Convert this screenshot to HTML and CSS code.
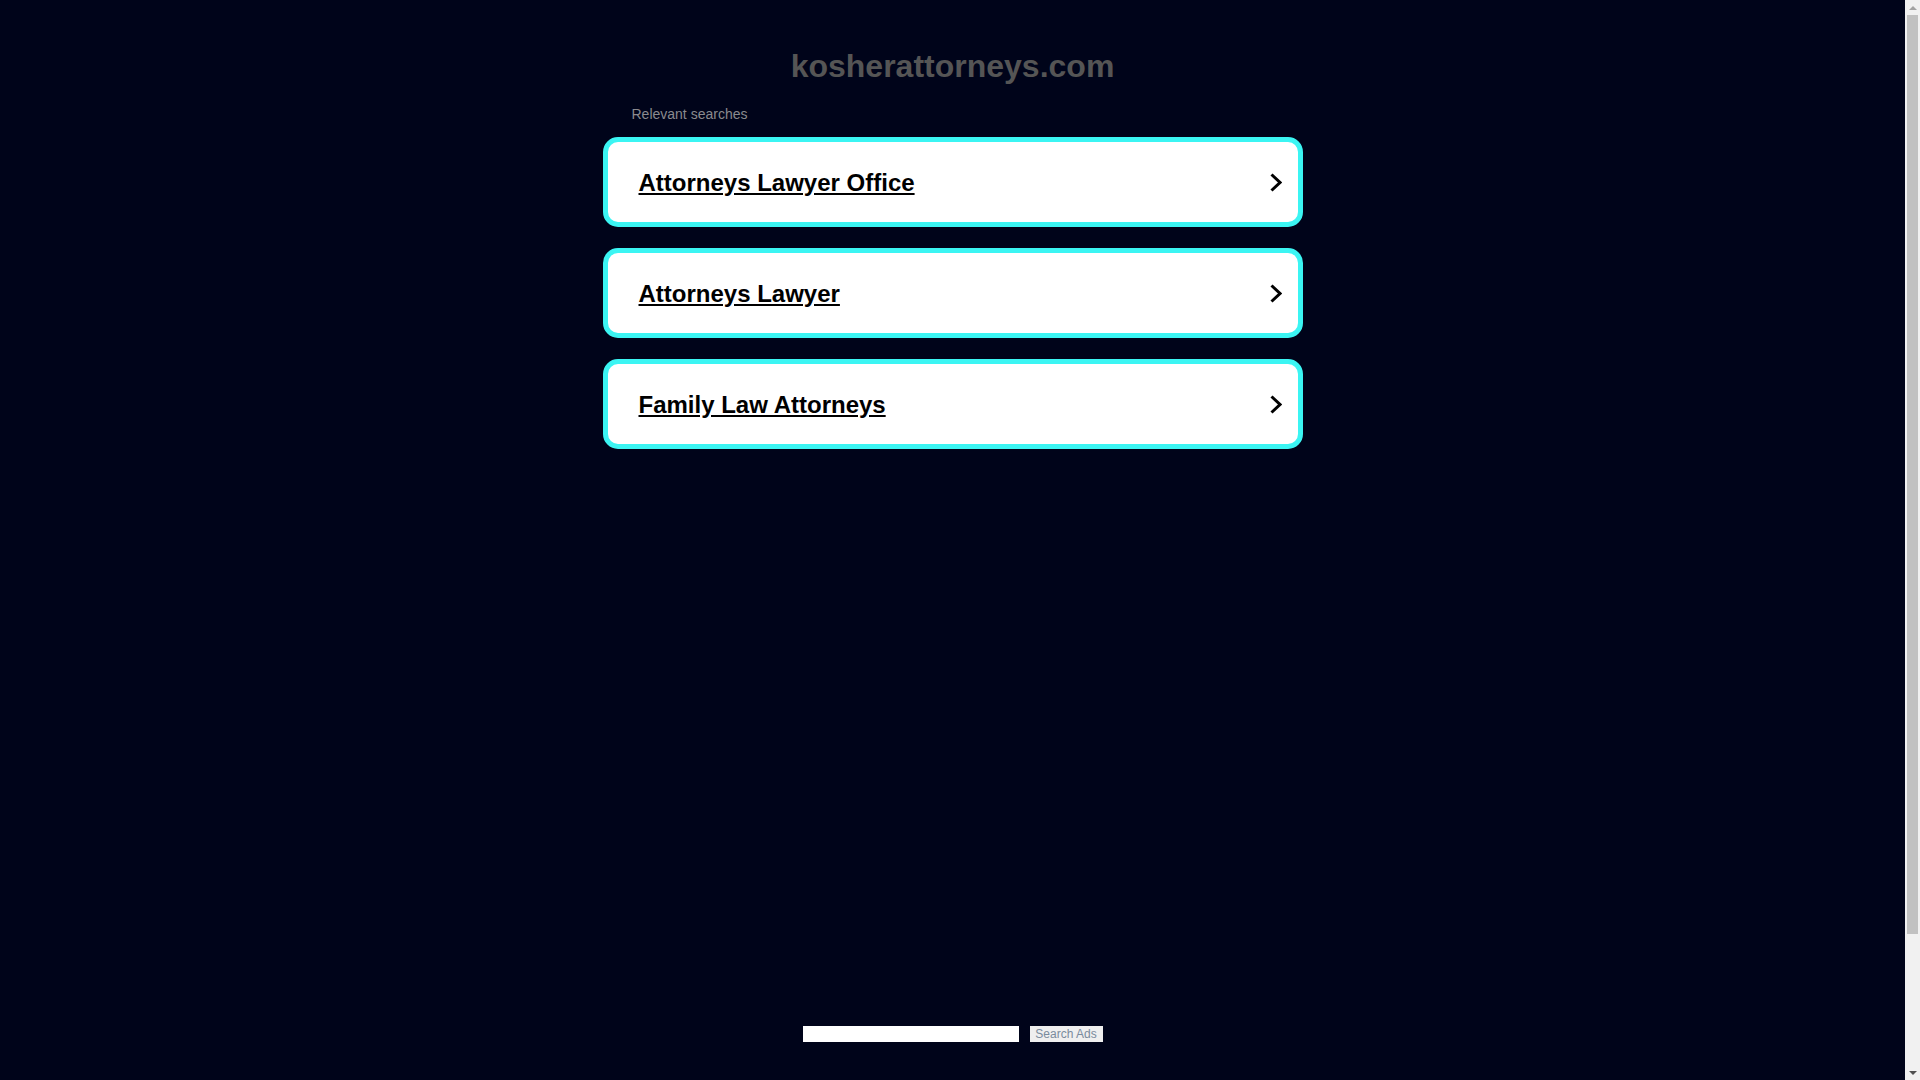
FILE: index.html
```html
<!DOCTYPE html>
<html lang="en">
<head>
<meta charset="utf-8">
<title>kosherattorneys.com</title>
<link rel="stylesheet" href="styles.css">
</head>
<body>
<div class="page">
  <h1 class="domain">kosherattorneys.com</h1>
  <div class="content">
    <div class="label">Relevant searches</div>
    <ul class="links">
      <li class="link-box"><a class="link" href="#">Attorneys Lawyer Office</a><svg class="chev" width="12" height="19" viewBox="0 0 12 19"><polyline points="1.5,1.5 10,9.5 1.5,17.5" fill="none" stroke="#000" stroke-width="3"/></svg></li>
      <li class="link-box"><a class="link" href="#">Attorneys Lawyer</a><svg class="chev" width="12" height="19" viewBox="0 0 12 19"><polyline points="1.5,1.5 10,9.5 1.5,17.5" fill="none" stroke="#000" stroke-width="3"/></svg></li>
      <li class="link-box"><a class="link" href="#">Family Law Attorneys</a><svg class="chev" width="12" height="19" viewBox="0 0 12 19"><polyline points="1.5,1.5 10,9.5 1.5,17.5" fill="none" stroke="#000" stroke-width="3"/></svg></li>
    </ul>
  </div>
  <form class="search" onsubmit="return false;">
    <input class="search-input" type="text" aria-label="Search">
    <button class="search-btn" type="submit">Search Ads</button>
  </form>
</div>
<div class="scrollbar" aria-hidden="true">
  <div class="sb-arrow sb-up"></div>
  <div class="sb-track"><div class="sb-thumb"></div></div>
  <div class="sb-arrow sb-down"></div>
</div>
</body>
</html>
```

FILE: styles.css
```css
html, body {
  margin: 0;
  padding: 0;
  background: #00041a;
}

body {
  font-family: "Liberation Sans", Arial, sans-serif;
}

.page {
  padding-bottom: 192px;
  padding-right: 15px;
}

.domain {
  margin: 48px 0 0;
  font-size: 32px;
  line-height: 37px;
  font-weight: bold;
  color: #555555;
  text-align: center;
}

.content {
  width: 700px;
  margin: 0 auto;
}

.label {
  margin-top: 21px;
  padding-left: 29px;
  font-size: 14px;
  line-height: 16px;
  color: #8a8a8e;
}

.links {
  list-style: none;
  margin: 15px 0 0;
  padding: 0;
}

.link-box {
  box-sizing: border-box;
  height: 90px;
  margin-bottom: 21px;
  border: 5px solid #3bf5f3;
  border-radius: 15px;
  background: #ffffff;
  display: flex;
  align-items: center;
  justify-content: space-between;
  padding: 1px 16px 0 31px;
}

.link-box:last-child {
  margin-bottom: 0;
}

.link {
  font-size: 24px;
  line-height: 28px;
  font-weight: bold;
  color: #000000;
  text-decoration: underline;
}

.chev {
  display: block;
}

.search {
  margin-top: 577px;
  display: flex;
  justify-content: center;
  gap: 11px;
}

.search-input {
  box-sizing: border-box;
  width: 216px;
  height: 16px;
  border: none;
  padding: 0 2px;
  margin: 0;
  background: #ffffff;
  outline: none;
}

.search-btn {
  box-sizing: border-box;
  width: 73px;
  height: 16px;
  border: none;
  padding: 0;
  margin: 0;
  background: #efefef;
  color: #7a8b9d;
  font-family: "Liberation Sans", Arial, sans-serif;
  font-size: 12px;
  line-height: 16px;
}

/* replica of the browser's classic vertical scrollbar */
.scrollbar {
  position: fixed;
  top: 0;
  right: 0;
  width: 15px;
  height: 100vh;
  background: #f1f1f1;
  display: flex;
  flex-direction: column;
}

.sb-arrow {
  height: 15px;
  display: flex;
  align-items: center;
  justify-content: center;
}

.sb-up::before,
.sb-down::before {
  content: "";
  width: 0;
  height: 0;
  border-left: 4px solid transparent;
  border-right: 4px solid transparent;
}

.sb-up::before {
  border-bottom: 4px solid #a3a3a3;
}

.sb-down::before {
  border-top: 4px solid #505050;
}

.sb-track {
  flex: 1;
  padding: 0 2px;
}

.sb-thumb {
  height: 919px;
  background: #c1c1c1;
}
```
